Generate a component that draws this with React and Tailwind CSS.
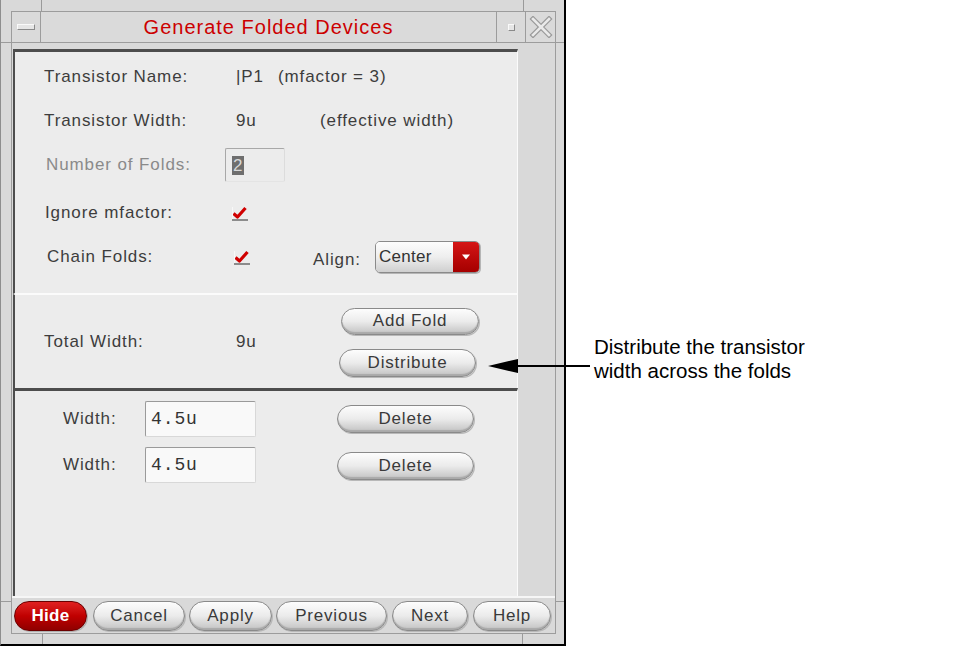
import React from 'react';

const sans = { fontFamily: '"Liberation Sans", Arial, sans-serif' };

// Rounded X11-style push button.
function Pill({ children, className = '' }) {
  return (
    <div
      className={`flex items-center justify-center rounded-full border border-[#8a8a8a] bg-gradient-to-b from-[#fdfdfd] via-[#ebebeb] to-[#c2c2c2] shadow-[inset_0_-2px_1px_#a9a9a9,1px_1px_0_#b8b8b8] text-[#3a3a3a] text-[17px] tracking-[0.8px] ${className}`}
    >
      {children}
    </div>
  );
}

function Check() {
  return (
    <svg width="18" height="17" viewBox="0 0 18 17" className="shrink-0">
      <path d="M2.5 8.5 L6.5 12 L14.5 3" stroke="#d00000" strokeWidth="3.2" fill="none" strokeLinejoin="round" />
      <rect x="1" y="14" width="16" height="2" fill="#8c8c8c" />
      <rect x="1" y="2" width="1" height="12" fill="#f8f8f8" />
    </svg>
  );
}

function Field({ value }) {
  return (
    <div
      className="flex items-center w-[111px] h-[36px] pl-[5px] bg-[#f9f9f9] border-t border-l border-[#9a9a9a] border-r border-b border-r-[#d8d8d8] border-b-[#d8d8d8] rounded-[2px] text-[18px] text-[#333]"
      style={{ fontFamily: '"Liberation Mono", "Courier New", monospace' }}
    >
      {value}
    </div>
  );
}

export default function App() {
  return (
    <div className="relative w-[975px] h-[647px] bg-white overflow-hidden flex" style={sans}>
      {/* dialog window */}
      <div className="relative w-[566px] h-[646px] shrink-0 bg-[#d9d9d9] border-l border-l-[#8e8e8e] border-r-2 border-r-black border-b-2 border-b-black pl-[10px] pr-[8px] pt-[11px] pb-[10px] flex flex-col">
        {/* frame handle separators */}
        <div className="absolute left-[40px] top-0 w-px h-[11px] bg-[#9a9a9a]" />
        <div className="absolute left-[522px] top-0 w-px h-[11px] bg-[#9a9a9a]" />
        <div className="absolute left-[41px] bottom-0 w-px h-[10px] bg-[#9a9a9a]" />
        <div className="absolute left-[521px] bottom-0 w-px h-[10px] bg-[#9a9a9a]" />
        <div className="absolute left-0 top-[42px] w-[10px] h-px bg-[#9a9a9a]" />
        <div className="absolute right-0 top-[42px] w-[8px] h-px bg-[#9a9a9a]" />
        <div className="absolute left-0 bottom-[42px] w-[10px] h-px bg-[#9a9a9a]" />
        <div className="absolute right-0 bottom-[42px] w-[8px] h-px bg-[#9a9a9a]" />

        <div className="flex-1 flex flex-col border border-[#9c9c9c]">
          {/* title bar */}
          <div className="flex h-[31px] shrink-0 bg-[#dadada] border-b border-[#9c9c9c]">
            <div className="w-[29px] flex items-center justify-center border-r border-[#9c9c9c]">
              <div className="w-[18px] h-[6px] bg-[#e6e6e6] border border-[#8a8a8a] border-t-[#fafafa] border-l-[#fafafa]" />
            </div>
            <div className="flex-1 flex items-center justify-center text-[20px] tracking-[1px] text-[#cc0000]">
              Generate Folded Devices
            </div>
            <div className="w-[29px] flex items-center justify-center border-l border-[#9c9c9c]">
              <div className="w-[7px] h-[7px] bg-[#e6e6e6] border border-[#8a8a8a] border-t-[#fafafa] border-l-[#fafafa]" />
            </div>
            <div className="w-[30px] flex items-center justify-center border-l border-[#9c9c9c]">
              <svg width="24" height="22" viewBox="0 0 24 22">
                <path d="M4 3 L20 19 M20 3 L4 19" stroke="#9a9a9a" strokeWidth="5" strokeLinecap="square" />
                <path d="M4 3 L20 19 M20 3 L4 19" stroke="#e9e9e9" strokeWidth="2.6" strokeLinecap="square" />
              </svg>
            </div>
          </div>

          {/* body */}
          <div className="flex-1 flex flex-col pt-[6px] text-[17px] tracking-[0.9px] text-[#3d3d3d]">
            <div className="ml-[1px] w-[505px] flex flex-col bg-[#ececec]">
              {/* section 1 */}
              <div className="h-[245px] flex flex-col border-t-[3px] border-l-2 border-[#4d4d4d] border-r border-r-[#fbfbfb] border-b border-b-[#fbfbfb] pl-[29px] pt-[2px]">
                <div className="h-[46px] flex items-center">
                  <span className="w-[192px]">Transistor Name:</span>
                  <span>|P1</span>
                  <span className="ml-[14px]">(mfactor = 3)</span>
                </div>
                <div className="h-[41px] flex items-center">
                  <span className="w-[192px]">Transistor Width:</span>
                  <span className="w-[84px]">9u</span>
                  <span>(effective width)</span>
                </div>
                <div className="h-[48px] flex items-center">
                  <span className="ml-[2px] w-[179px] text-[#8a8a8a]">Number of Folds:</span>
                  <div className="w-[60px] h-[34px] flex items-center pl-[6px] border-t border-l border-[#a8a8a8] border-r border-r-[#dcdcdc] border-b border-b-[#e4e4e4] rounded-[2px]">
                    <span className="px-[1px] bg-[#6e6e6e] text-[#d8d8d8] leading-[19px]">2</span>
                  </div>
                </div>
                <div className="h-[48px] flex items-center">
                  <span className="ml-[1px] w-[186px]">Ignore mfactor:</span>
                  <Check />
                </div>
                <div className="h-[40px] flex items-center">
                  <span className="ml-[3px] w-[186px]">Chain Folds:</span>
                  <Check />
                  <span className="ml-[62px] mt-[6px] w-[62px]">Align:</span>
                  <div className="flex w-[105px] h-[32px] rounded-[5px] border border-[#8a8a8a] overflow-hidden shadow-[1px_1px_0_#b5b5b5]">
                    <div className="flex-1 flex items-center pl-[3px] bg-gradient-to-b from-[#fdfdfd] via-[#eeeeee] to-[#cfcfcf] text-[#333] tracking-[0.3px]">
                      Center
                    </div>
                    <div className="w-[26px] flex items-center justify-center bg-gradient-to-b from-[#d51515] to-[#a50000]">
                      <svg width="10" height="6" viewBox="0 0 10 6">
                        <path d="M1 0.5 L9 0.5 L5 5.5 Z" fill="#fff" />
                      </svg>
                    </div>
                  </div>
                </div>
              </div>

              {/* section 2 */}
              <div className="h-[94px] flex items-center border-l-2 border-[#4d4d4d] border-t border-t-[#fbfbfb] border-r border-r-[#fbfbfb] pl-[29px] pt-[1px]">
                <span className="w-[192px]">Total Width:</span>
                <span className="w-[103px]">9u</span>
                <div className="flex flex-col gap-[14px]">
                  <Pill className="ml-[2px] w-[138px] h-[27px]">Add Fold</Pill>
                  <Pill className="w-[137px] h-[28px]">Distribute</Pill>
                </div>
              </div>

              {/* section 3 */}
              <div className="h-[208px] flex flex-col gap-[10px] border-t-[3px] border-l-2 border-[#4d4d4d] border-r border-r-[#fbfbfb] pl-[48px] pt-[10px]">
                {[0, 1].map((i) => (
                  <div key={i} className="h-[36px] flex items-center">
                    <span className="w-[82px]">Width:</span>
                    <Field value="4.5u" />
                    <Pill className={`ml-[81px] w-[137px] h-[28px] ${i === 1 ? 'mt-[2px]' : ''}`}>Delete</Pill>
                  </div>
                ))}
              </div>
            </div>

            {/* action buttons */}
            <div className="flex-1 flex items-center pl-[2px] border-t-2 border-[#f6f6f6]">
              <div className="flex items-center justify-center w-[73px] h-[30px] rounded-full border border-[#6a0000] bg-gradient-to-b from-[#e02020] via-[#c00000] to-[#900000] text-white font-bold text-[17px] tracking-[0.3px] shadow-[1px_1px_0_#b0b0b0]">
                Hide
              </div>
              <Pill className="ml-[6px] w-[92px] h-[30px]">Cancel</Pill>
              <Pill className="ml-[4px] w-[83px] h-[30px]">Apply</Pill>
              <Pill className="ml-[4px] w-[111px] h-[30px]">Previous</Pill>
              <Pill className="ml-[5px] w-[76px] h-[30px]">Next</Pill>
              <Pill className="ml-[5px] w-[78px] h-[30px]">Help</Pill>
            </div>
          </div>
        </div>
      </div>

      {/* callout text */}
      <div className="ml-[28px] pt-[335px] text-[20.5px] leading-[24px] text-black">
        <div>Distribute the transistor</div>
        <div>width across the folds</div>
      </div>

      {/* callout arrow */}
      <svg className="absolute left-[486px] top-[358px]" width="106" height="16" viewBox="0 0 106 16">
        <path d="M2 8 L32 1 L32 15 Z" fill="#000" />
        <rect x="30" y="7" width="74" height="2" fill="#000" />
      </svg>
    </div>
  );
}
